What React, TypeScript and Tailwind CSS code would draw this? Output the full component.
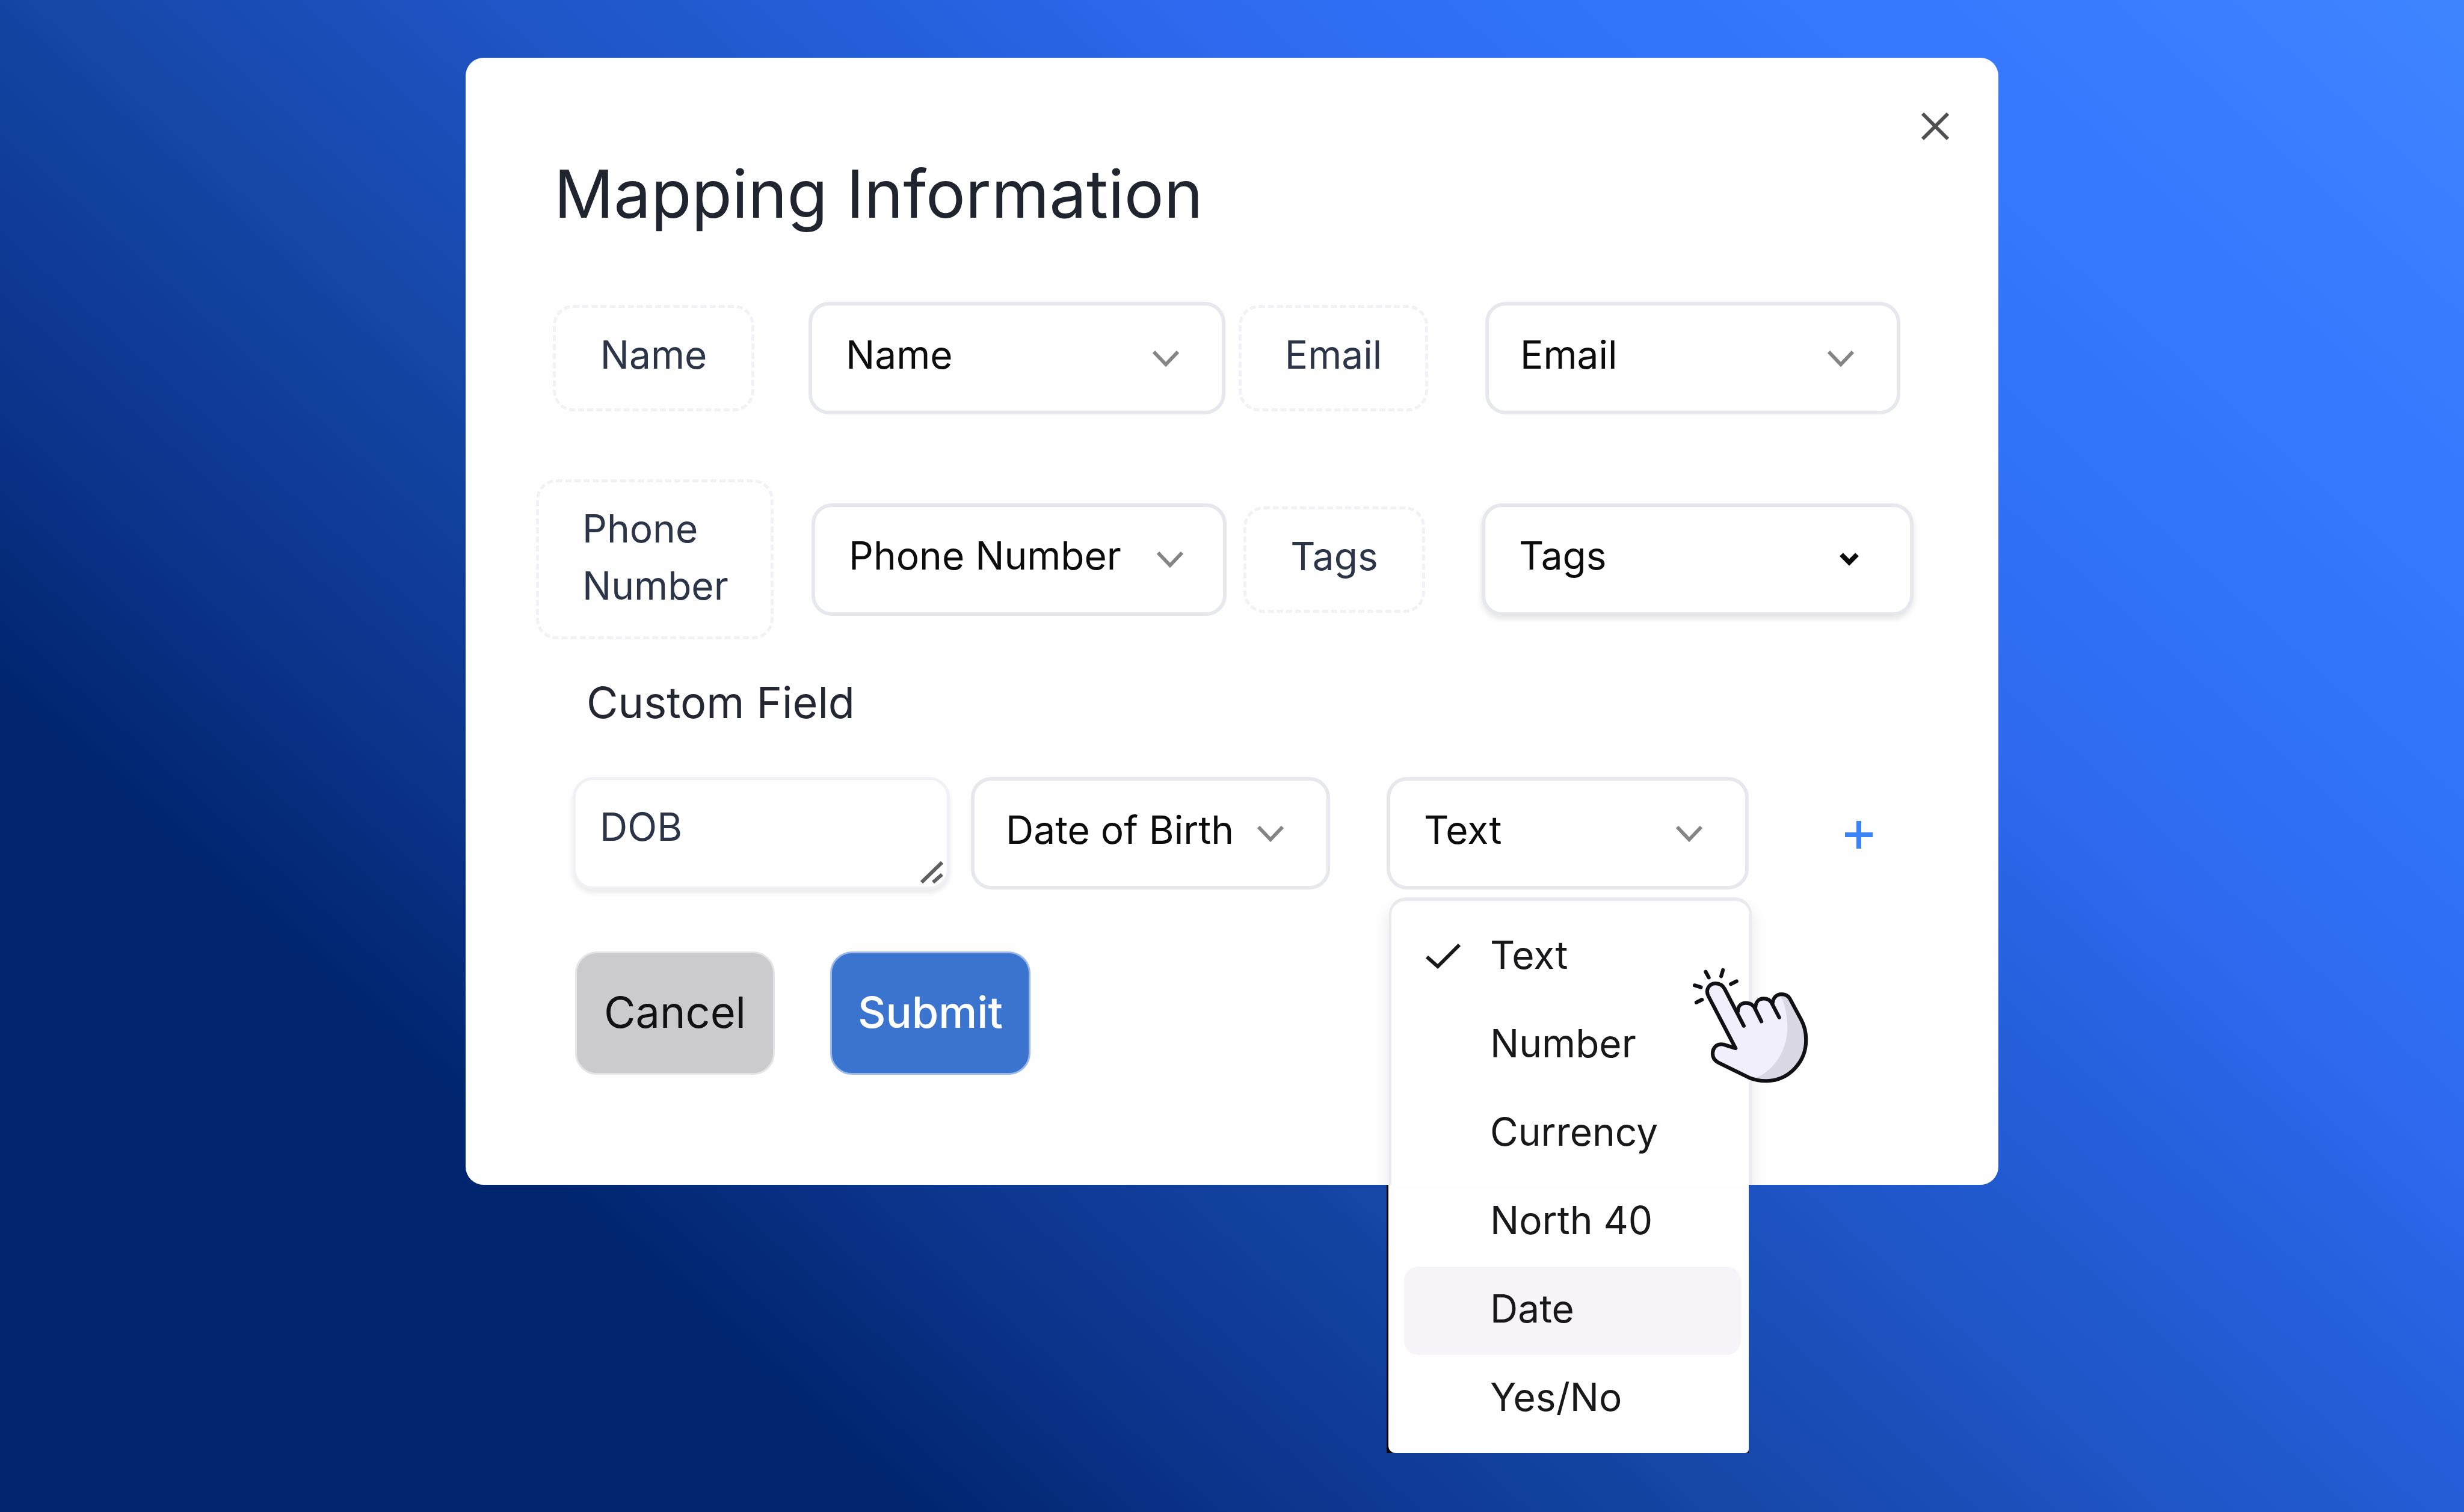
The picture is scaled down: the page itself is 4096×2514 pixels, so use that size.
import React from "react";

function Chevron({ className = "" }: { className?: string }) {
  return (
    <svg
      aria-hidden="true"
      viewBox="0 0 48 30"
      className={`pointer-events-none absolute top-1/2 h-[30px] w-12 -translate-y-1/2 ${className}`}
      fill="none"
      stroke="currentColor"
      strokeWidth="6"
    >
      <path d="M4 4 L24 25 L44 4" />
    </svg>
  );
}

function SelectBox({
  id,
  label,
  value,
  boxClass,
  textClass = "pl-[56px]",
  children,
}: {
  id: string;
  label: string;
  value: string;
  boxClass: string;
  textClass?: string;
  children?: React.ReactNode;
}) {
  return (
    <div className={`relative h-[187px] ${boxClass}`}>
      <select
        id={id}
        aria-label={label}
        defaultValue={value}
        className={`h-full w-full appearance-none rounded-[34px] border-[6px] border-[#e6e8ed] bg-white pb-3 text-[64px] text-[#0c0c0d] ${textClass}`}
      >
        <option>{value}</option>
      </select>
      {children ?? <Chevron className="right-[75px] text-[#858585]" />}
    </div>
  );
}

function FieldLabel({
  htmlFor,
  className,
  children,
}: {
  htmlFor: string;
  className: string;
  children: React.ReactNode;
}) {
  return (
    <label
      htmlFor={htmlFor}
      className={`flex items-center rounded-[34px] border-[5px] border-dashed border-[#f2f1f5] text-[64px] leading-[95px] text-[#2b3547] ${className}`}
    >
      {children}
    </label>
  );
}

function PointingHand() {
  return (
    <svg
      aria-hidden="true"
      viewBox="0 0 960 960"
      className="pointer-events-none absolute top-24 left-[486px] h-[238px] w-[238px]"
      fill="none"
      strokeLinecap="round"
      strokeLinejoin="round"
    >
      <path
        fill="#f1effb"
        d="M380 625 L197 275 C175 225 205 190 245 190 C275 190 295 205 307 228 L390 385 C390 345 415 321 450 321 C478 321 497 335 510 358 C513 315 535 292 568 292 C595 292 614 305 625 328 C630 285 655 263 688 263 C712 263 730 272 742 290 L820 435 C842 475 852 520 852 570 C852 715 740 840 590 844 C550 845 510 838 470 822 L262 720 C240 708 226 690 226 662 C226 620 255 590 300 600 Z"
      />
      <path
        fill="#dad8e4"
        d="M678 265 C712 262 730 272 742 290 L820 435 C842 475 852 520 852 570 C852 715 740 840 590 844 C562 845 538 838 512 824 C625 784 726 650 727 490 C727 405 712 335 678 265 Z"
      />
      <g stroke="#111015" strokeWidth="25">
        <path d="M435 475 L307 228 C295 205 275 190 245 190 C205 190 175 229 197 275 L380 625 L300 600 C255 590 226 620 226 662 C226 690 240 708 262 720 L470 822 C510 838 550 845 590 844 C740 840 852 715 852 570 C852 520 842 475 820 435 L742 290 C730 272 712 263 688 263 C655 263 632 285 628 322" />
        <path d="M395 378 C395 345 415 321 450 321 C478 321 497 335 508 355 L553 445" />
        <path d="M513 350 C515 315 535 292 568 292 C595 292 612 303 622 322 L672 418" />
        <path d="M179 112 L200 150" />
        <path d="M295 101 L283 142" />
        <path d="M348 195 L386 175" />
        <path d="M105 203 L147 216" />
        <path d="M117 318 L154 299" />
      </g>
    </svg>
  );
}

const options = ["Text", "Number", "Currency", "North 40", "Date", "Yes/No"];

function OptionsMenu() {
  return (
    <div className="absolute top-[200px] left-0 h-[924px] w-[607px]">
      <div className="absolute top-0 right-0 left-[4px] h-[478px] rounded-t-[28px] border-x-4 border-t-[6px] border-[#ebe9ed] bg-white shadow-[0_16px_24px_rgba(40,20,60,0.10)] [clip-path:inset(0_-60px_0_-60px)]" />
      <div className="absolute bottom-0 left-0 h-[446px] w-[602px] bg-black pl-[3px]">
        <div className="h-full rounded-bl-[12px] rounded-br-[6px] bg-[#fefefe]" />
      </div>
      <ul role="listbox" aria-label="Field type options" className="relative pt-[26px] pr-[18px] pl-[29px]">
        {options.map((option) => (
          <li
            key={option}
            role="option"
            aria-selected={option === "Text"}
            className={`relative flex h-[147px] items-center rounded-[24px] pb-2 pl-[143px] text-[64px] text-[#18181b] ${
              option === "Date" ? "bg-[#f6f4f8]" : ""
            }`}
          >
            {option === "Text" && (
              <svg
                aria-hidden="true"
                viewBox="0 0 60 44"
                className="absolute top-[50px] left-[35px] h-11 w-[60px]"
                fill="none"
                stroke="currentColor"
                strokeWidth="6"
              >
                <path d="M3 23 L21 39 L57 3" />
              </svg>
            )}
            {option}
          </li>
        ))}
      </ul>
      <PointingHand />
    </div>
  );
}

export default function App() {
  return (
    <div className="min-h-screen bg-[linear-gradient(42deg,#00256f_0%,#00256f_22%,#0b338a_30%,#1545a5_41%,#1e54c4_52%,#2560dc_62%,#2e69ef_69%,#3073fa_78%,#397bff_90%,#3f84ff_100%)] pt-24 font-['Inter',sans-serif]">
      <main className="relative mx-auto w-full max-w-[2548px] rounded-[30px] bg-[#fefefe] pt-[158px] pb-[183px]">
        <button
          type="button"
          aria-label="Close"
          className="absolute top-[90px] right-[81px] flex h-12 w-12 items-center justify-center text-[#4f4f52]"
        >
          <svg viewBox="0 0 48 48" className="h-12 w-12" fill="none" stroke="currentColor" strokeWidth="6">
            <path d="M3 3 L45 45 M45 3 L3 45" />
          </svg>
        </button>

        <h1 className="pl-[147px] text-[110px] leading-[136px] text-[#20242f]">Mapping Information</h1>

        <form onSubmit={(event) => event.preventDefault()}>
          <div className="mt-[112px] flex items-center pl-[145px]">
            <FieldLabel htmlFor="name" className="h-[177px] w-[335px] justify-center pb-3">
              Name
            </FieldLabel>
            <SelectBox id="name" label="Name" value="Name" boxClass="ml-[90px] w-[693px]" />
            <FieldLabel htmlFor="email" className="ml-[22px] h-[177px] w-[315px] justify-center pb-3">
              Email
            </FieldLabel>
            <SelectBox
              id="email"
              label="Email"
              value="Email"
              boxClass="ml-[95px] w-[690px]"
              textClass="pl-[52px]"
            />
          </div>

          <div className="mt-[108px] flex items-center pl-[117px]">
            <FieldLabel htmlFor="phone" className="h-[266px] w-[395px] pr-[60px] pb-2 pl-[72px]">
              Phone Number
            </FieldLabel>
            <SelectBox
              id="phone"
              label="Phone Number"
              value="Phone Number"
              boxClass="ml-[63px] w-[690px]"
            >
              <Chevron className="right-[70px] text-[#858585]" />
            </SelectBox>
            <FieldLabel htmlFor="tags" className="ml-[28px] h-[177px] w-[302px] justify-center pb-3">
              Tags
            </FieldLabel>
            <SelectBox
              id="tags"
              label="Tags"
              value="Tags"
              boxClass="ml-[94px] w-[718px] rounded-[34px] shadow-[0_5px_8px_rgba(20,20,30,0.10)]"
            >
              <svg
                aria-hidden="true"
                viewBox="0 0 34 24"
                className="pointer-events-none absolute top-1/2 right-[90px] h-6 w-[34px] -translate-y-1/2"
                fill="none"
                stroke="#0a0a0a"
                strokeWidth="8"
              >
                <path d="M4 4 L17 17 L30 4" />
              </svg>
            </SelectBox>
          </div>

          <h2 className="mt-[65px] pl-[201px] text-[72px] leading-[80px] text-[#242732]">Custom Field</h2>

          <div className="mt-[84px] flex items-center pl-[178px]">
            <div className="relative h-[187px] w-[627px]">
              <textarea
                aria-label="Custom field name"
                defaultValue="DOB"
                className="block h-full w-full resize-none overflow-hidden rounded-[34px] border-[5px] border-[#f1f0f4] bg-white pt-[38px] pl-[40px] text-[64px] leading-[80px] text-[#2b3547] shadow-[0_6px_7px_rgba(20,20,40,0.08)]"
              />
              <svg
                aria-hidden="true"
                viewBox="0 0 38 38"
                className="pointer-events-none absolute right-[11px] bottom-[10px] h-[38px] w-[38px]"
                fill="none"
                stroke="#5f5e62"
                strokeWidth="6"
              >
                <path d="M2 36 L36 3 M21 36 L36 23" />
              </svg>
            </div>
            <SelectBox
              id="source"
              label="Custom field source"
              value="Date of Birth"
              boxClass="ml-[35px] w-[597px]"
              textClass="pl-[52px]"
            />
            <SelectBox
              id="type"
              label="Custom field type"
              value="Text"
              boxClass="ml-[94px] w-[602px]"
            >
              <Chevron className="right-[75px] text-[#858585]" />
              <OptionsMenu />
            </SelectBox>
            <button type="button" aria-label="Add custom field" className="ml-[159px] pt-1 text-[#3b82f6]">
              <svg viewBox="0 0 48 48" className="h-12 w-12" fill="none" stroke="currentColor" strokeWidth="8">
                <path d="M24 1 V47 M1 24 H47" />
              </svg>
            </button>
          </div>

          <div className="mt-[103px] flex gap-[92px] pl-[182px]">
            <button
              type="button"
              className="h-[205px] w-[332px] rounded-[36px] border-[3px] border-[#e4e4e6] bg-[#cbcbcd] pb-1 text-[72px] text-[#111111]"
            >
              Cancel
            </button>
            <button
              type="submit"
              className="h-[205px] w-[333px] rounded-[36px] border-[3px] border-[#9ab9ea] bg-[#3b74ce] pb-1 text-[72px] font-medium text-white"
            >
              Submit
            </button>
          </div>
        </form>
      </main>
    </div>
  );
}
